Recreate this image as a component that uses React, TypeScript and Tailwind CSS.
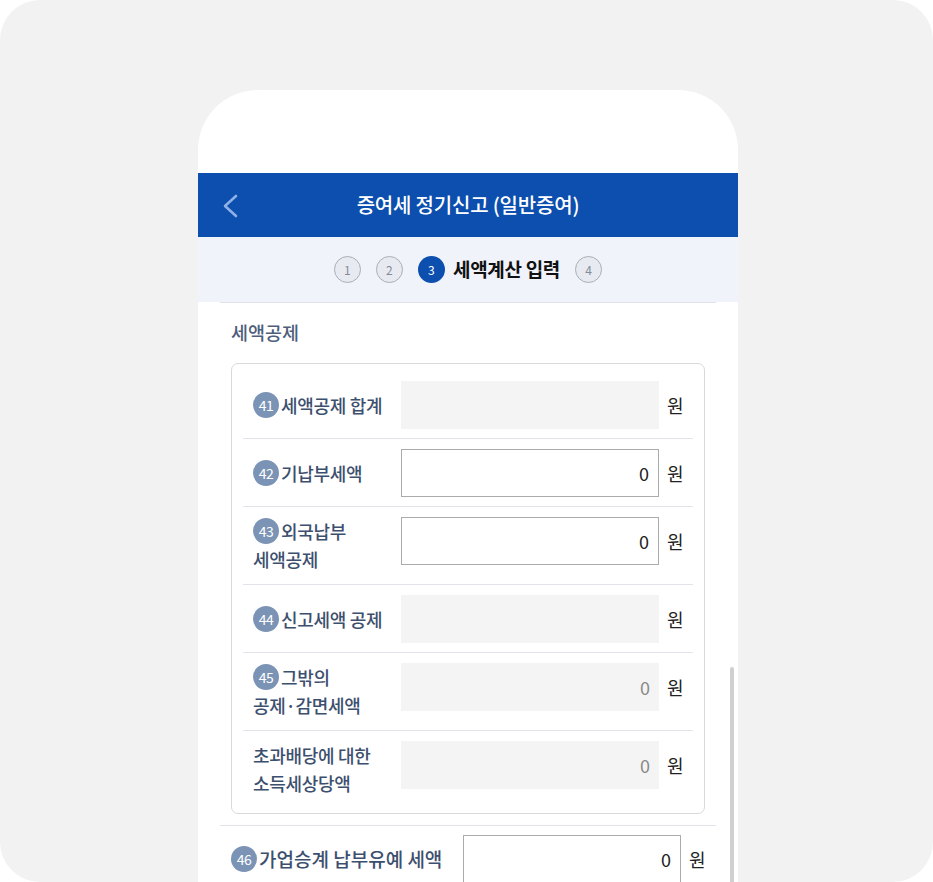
import React from 'react';

const font = { fontFamily: '"Noto Sans CJK KR", "Noto Sans", sans-serif' };

type Row = {
  no?: number;
  lines: string[];
  value: string;
  kind: 'readonly' | 'input';
};

const rows: Row[] = [
  { no: 41, lines: ['세액공제 합계'], value: '', kind: 'readonly' },
  { no: 42, lines: ['기납부세액'], value: '0', kind: 'input' },
  { no: 43, lines: ['외국납부', '세액공제'], value: '0', kind: 'input' },
  { no: 44, lines: ['신고세액 공제'], value: '', kind: 'readonly' },
  { no: 45, lines: ['그밖의', '공제·감면세액'], value: '0', kind: 'readonly' },
  { lines: ['초과배당에 대한', '소득세상당액'], value: '0', kind: 'readonly' },
];

function Badge({ no }: { no: number }) {
  return (
    <span className="inline-flex w-[26px] h-[26px] rounded-full bg-[#7b93b5] text-white text-[14px] font-normal items-center justify-center tracking-[-0.6px] shrink-0 mr-[2px]">
      {no}
    </span>
  );
}

function Field({ value, kind, width }: { value: string; kind: Row['kind']; width: string }) {
  return (
    <div
      className={`${width} h-[48px] shrink-0 flex items-center justify-end pr-[9px] text-[18px] ${
        kind === 'input'
          ? 'bg-white border border-[#ababab] text-[#222]'
          : 'bg-[#f4f4f4] text-[#8a8a8a]'
      }`}
    >
      {value}
    </div>
  );
}

function Step({ n, active }: { n: number; active?: boolean }) {
  return (
    <span
      className={`w-[27px] h-[27px] rounded-full flex items-center justify-center text-[12px] ${
        active
          ? 'bg-[#0c4fae] text-white'
          : 'bg-[#e7eaf1] border-[1.5px] border-[#a9adb6] text-[#858a94]'
      }`}
    >
      {n}
    </span>
  );
}

export default function App() {
  return (
    <div className="bg-white w-[933px] h-[882px]" style={font}>
      <div className="relative w-[933px] h-[882px] bg-[#f2f2f2] rounded-[40px] overflow-hidden pt-[90px] pl-[198px]">
        <div className="relative w-[540px] h-[792px] bg-white rounded-t-[60px] overflow-hidden">
          {/* status area */}
          <div className="h-[83px]" />

          {/* header */}
          <div className="relative h-[64px] bg-[#0c4fae] flex items-center justify-center">
            <svg
              className="absolute left-[24px] top-[21px]"
              width="16"
              height="24"
              viewBox="0 0 16 24"
              fill="none"
              stroke="#8fb1e6"
              strokeWidth="2.6"
              strokeLinecap="round"
              strokeLinejoin="round"
            >
              <polyline points="14,2 3,12 14,22" />
            </svg>
            <h1 className="text-white text-[20px] tracking-[-0.2px] font-medium">증여세 정기신고 (일반증여)</h1>
          </div>

          {/* steps */}
          <div className="h-[65px] bg-[#f0f3fa] flex items-center justify-center">
            <div className="flex items-center gap-[15px]">
              <Step n={1} />
              <Step n={2} />
              <div className="flex items-center gap-[8px]">
                <Step n={3} active />
                <span className="text-[19px] font-semibold tracking-[-0.3px] text-[#111]">세액계산 입력</span>
              </div>
              <Step n={4} />
            </div>
          </div>

          {/* content */}
          <div className="px-[22px]">
            <div className="border-t border-[#dfe2ea] px-[11px]">
              <div className="h-[60px] flex items-center text-[18.5px] font-medium text-[#4e5e7c]">세액공제</div>

              <div className="border border-[#d9d9d9] rounded-[7px] px-[11px] pt-[7px] pb-[5px]">
                {rows.map((r, i) => (
                  <div
                    key={i}
                    className={`flex items-start pt-[10px] ${r.lines.length > 1 ? 'pb-[11px]' : 'pb-[9px]'} ${
                      i > 0 ? 'border-t border-[#e2e4ea]' : ''
                    }`}
                  >
                    <div className="w-[158px] min-h-[48px] flex flex-col justify-center pl-[10px] text-[18px] leading-[28px] font-medium tracking-[-0.3px] text-[#3d4f6e]">
                      {r.lines.map((l, j) => (
                        <div key={j} className="flex items-center whitespace-nowrap">
                          {j === 0 && r.no && <Badge no={r.no} />}
                          {l}
                        </div>
                      ))}
                    </div>
                    <Field value={r.value} kind={r.kind} width="w-[258px]" />
                    <span className="ml-[8px] text-[18px] leading-[48px] text-[#222]">원</span>
                  </div>
                ))}
              </div>
            </div>

            <div className="mt-[11px] border-t border-[#e2e4ea] pt-[9px] pl-[11px] pr-[10px] flex items-center">
              <div className="w-[232px] flex items-center whitespace-nowrap text-[19px] font-medium tracking-[0px] text-[#3d4f6e]">
                <Badge no={46} />
                가업승계 납부유예 세액
              </div>
              <Field value="0" kind="input" width="w-[218px]" />
              <span className="ml-[8px] text-[18px] text-[#222]">원</span>
            </div>
          </div>

          {/* scrollbar */}
          <div className="absolute right-[4px] top-[577px] w-[4px] h-[230px] rounded-full bg-[#d0d0d0]" />
        </div>
      </div>
    </div>
  );
}
